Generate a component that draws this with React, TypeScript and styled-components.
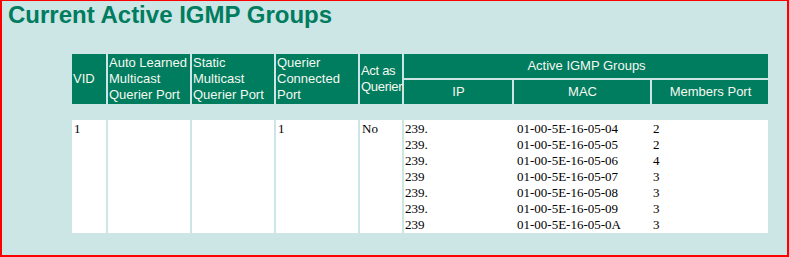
import styled, { createGlobalStyle } from "styled-components";

const GlobalStyle = createGlobalStyle`
  html, body {
    margin: 0;
    padding: 0;
    background: #cce5e5;
  }
`;

const Page = styled.div`
  box-sizing: border-box;
  width: 789px;
  height: 257px;
  background: #cce5e5;
  border-style: solid;
  border-color: #ff0000;
  border-width: 1px 2px 2px 2px;
  overflow: hidden;
`;

const Title = styled.h1`
  margin: 0;
  padding: 0 0 0 6px;
  font-family: "Liberation Sans", Arial, sans-serif;
  font-size: 24px;
  line-height: 27px;
  font-weight: bold;
  color: #007c5f;
`;

const Table = styled.table`
  margin: 24px 0 0 68px;
  width: 700px;
  table-layout: fixed;
  border-collapse: separate;
  border-spacing: 2px;
`;

const Head = styled.th<{ $center?: boolean; $tight?: boolean }>`
  background: #007c5f;
  color: #f6f8f0;
  font-family: "Liberation Sans", Arial, sans-serif;
  font-size: 13px;
  line-height: 16px;
  font-weight: normal;
  text-align: ${(p) => (p.$center ? "center" : "left")};
  letter-spacing: ${(p) => (p.$tight ? "-0.3px" : "normal")};
  vertical-align: middle;
  padding: 1px 0 1px 1px;
  height: 22px;
`;

const SpacerRow = styled.tr`
  height: 12px;
`;

const Cell = styled.td`
  background: #ffffff;
  color: #000000;
  font-family: "Liberation Serif", "Times New Roman", serif;
  font-size: 13px;
  line-height: 16px;
  vertical-align: top;
  padding: 1px 1px 0 2px;
  height: 112px;
`;

const GroupCell = styled.td`
  background: #ffffff;
  vertical-align: top;
  padding: 1px 0 0 0;
  height: 112px;
`;

const Inner = styled.table`
  width: 100%;
  table-layout: fixed;
  border-collapse: collapse;
`;

const InnerCell = styled.td`
  color: #000000;
  font-family: "Liberation Serif", "Times New Roman", serif;
  font-size: 13px;
  line-height: 16px;
  padding: 0 0 0 1px;
  white-space: nowrap;
  overflow: hidden;
`;

interface IGroup {
  ip: string;
  mac: string;
  port: number;
}

const groups: IGroup[] = [
  { ip: "239.", mac: "01-00-5E-16-05-04", port: 2 },
  { ip: "239.", mac: "01-00-5E-16-05-05", port: 2 },
  { ip: "239.", mac: "01-00-5E-16-05-06", port: 4 },
  { ip: "239", mac: "01-00-5E-16-05-07", port: 3 },
  { ip: "239.", mac: "01-00-5E-16-05-08", port: 3 },
  { ip: "239.", mac: "01-00-5E-16-05-09", port: 3 },
  { ip: "239", mac: "01-00-5E-16-05-0A", port: 3 },
];

function App() {
  return (
    <>
      <GlobalStyle />
      <Page>
        <Title>Current Active IGMP Groups</Title>
        <Table>
          <colgroup>
            <col style={{ width: 34 }} />
            <col style={{ width: 82 }} />
            <col style={{ width: 82 }} />
            <col style={{ width: 82 }} />
            <col style={{ width: 42 }} />
            <col style={{ width: 108 }} />
            <col style={{ width: 136 }} />
            <col />
          </colgroup>
          <thead>
            <tr>
              <Head rowSpan={2}>VID</Head>
              <Head rowSpan={2}>Auto Learned Multicast Querier Port</Head>
              <Head rowSpan={2}>Static Multicast Querier Port</Head>
              <Head rowSpan={2}>Querier Connected Port</Head>
              <Head rowSpan={2} $tight>
                Act as Querier
              </Head>
              <Head colSpan={3} $center>
                Active IGMP Groups
              </Head>
            </tr>
            <tr>
              <Head $center>IP</Head>
              <Head $center>MAC</Head>
              <Head $center>Members Port</Head>
            </tr>
          </thead>
          <tbody>
            <SpacerRow>
              <td colSpan={8} />
            </SpacerRow>
            <tr>
              <Cell>1</Cell>
              <Cell />
              <Cell />
              <Cell>1</Cell>
              <Cell>No</Cell>
              <GroupCell colSpan={3}>
                <Inner>
                  <colgroup>
                    <col style={{ width: 112 }} />
                    <col style={{ width: 136 }} />
                    <col />
                  </colgroup>
                  <tbody>
                    {groups.map((g) => (
                      <tr key={g.mac}>
                        <InnerCell>{g.ip}</InnerCell>
                        <InnerCell>{g.mac}</InnerCell>
                        <InnerCell>{g.port}</InnerCell>
                      </tr>
                    ))}
                  </tbody>
                </Inner>
              </GroupCell>
            </tr>
          </tbody>
        </Table>
      </Page>
    </>
  );
}

export default App;
